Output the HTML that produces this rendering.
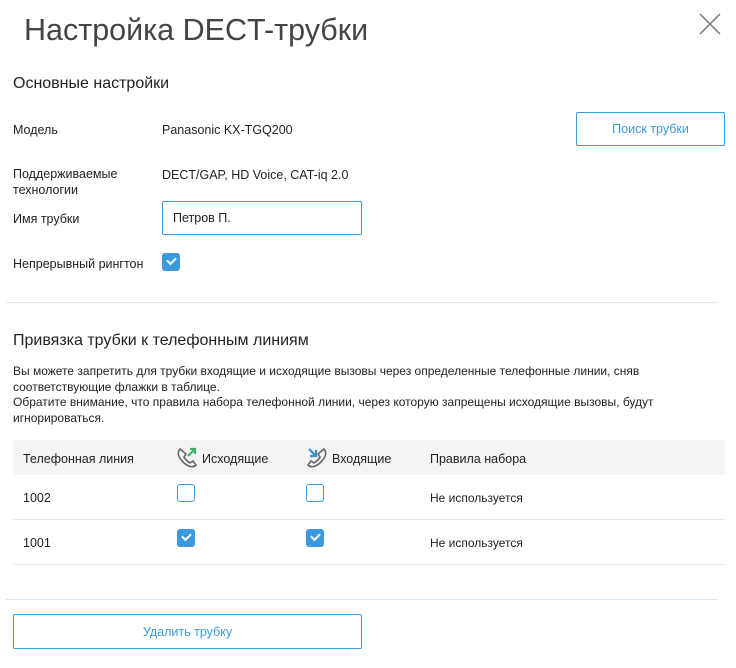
<!DOCTYPE html>
<html><head><meta charset="utf-8"><style>
*{margin:0;padding:0;box-sizing:border-box}
body{width:736px;height:668px;background:#fff;font-family:"Liberation Sans",sans-serif;color:#222;position:relative;overflow:hidden;font-size:12.5px}
.a{position:absolute;white-space:nowrap}
.cb{position:absolute;width:18px;height:18px;border:1.5px solid #3b99dc;border-radius:3px;background:#fff}
.cb.on{background:#3b99dc}
.cb.on:after{content:"";position:absolute;left:4px;top:3px;width:7px;height:4px;border-left:2px solid #fff;border-bottom:2px solid #fff;transform:rotate(-45deg)}
.hr{position:absolute;left:6px;width:712px;height:1px;background:#d9e8f1}
.btn{position:absolute;border:1px solid #3b99dc;border-radius:2px;color:#3b99dc;text-align:center;font-size:12.5px}
</style></head><body>
<div class="a" style="left:24px;top:13px;font-size:30.5px;color:#444">Настройка DECT-трубки</div>
<svg class="a" style="left:699px;top:13px" width="22" height="22"><path d="M1 1L21 21M21 1L1 21" stroke="#777" stroke-width="1.5"/></svg>
<div class="a" style="left:13px;top:75px;font-size:16px">Основные настройки</div>
<div class="a" style="left:13px;top:123px">Модель</div>
<div class="a" style="left:162px;top:123px">Panasonic KX-TGQ200</div>
<div class="btn" style="left:576px;top:112px;width:149px;height:34px;line-height:33px">Поиск трубки</div>
<div class="a" style="left:13px;top:166px;line-height:16px">Поддерживаемые<br>технологии</div>
<div class="a" style="left:162px;top:168px">DECT/GAP, HD Voice, CAT-iq 2.0</div>
<div class="a" style="left:13px;top:212px">Имя трубки</div>
<div class="a" style="left:162px;top:201px;width:200px;height:34px;border:1px solid #3b99dc;border-radius:2px;padding:9px 10px">Петров П.</div>
<div class="a" style="left:13px;top:257px">Непрерывный рингтон</div>
<div class="cb on" style="left:162px;top:253px"></div>
<div class="hr" style="top:302px"></div>
<div class="a" style="left:13px;top:332px;font-size:16px">Привязка трубки к телефонным линиям</div>
<div class="a" style="left:13px;top:364px;line-height:15.5px;font-size:12px">Вы можете запретить для трубки входящие и исходящие вызовы через определенные телефонные линии, сняв<br>соответствующие флажки в таблице.<br>Обратите внимание, что правила набора телефонной линии, через которую запрещены исходящие вызовы, будут<br>игнорироваться.</div>
<div class="a" style="left:13px;top:440px;width:712px;height:35px;background:#f4f4f4"></div>
<div class="a" style="left:23px;top:452px">Телефонная линия</div>
<svg class="a" style="left:176px;top:446px" width="22" height="22"><path d="M4 3c-3 3-2 8 3 13s10 6 13 3l-3-4-3 2c-2-1-5-4-6-6l2-3z" fill="none" stroke="#666" stroke-width="1.6"/><path d="M12 10l7-7M14 3h5v5" fill="none" stroke="#3fae6a" stroke-width="2.2"/></svg>
<div class="a" style="left:202px;top:452px">Исходящие</div>
<svg class="a" style="left:306px;top:446px" width="22" height="22"><path d="M18 3c3 3 2 8-3 13s-10 6-13 3l3-4 3 2c2-1 5-4 6-6l-2-3z" fill="none" stroke="#666" stroke-width="1.6"/><path d="M3 3l7 7M4 10h6V4" fill="none" stroke="#3b8fd0" stroke-width="2.2"/></svg>
<div class="a" style="left:332px;top:452px">Входящие</div>
<div class="a" style="left:430px;top:452px">Правила набора</div>
<div class="a" style="left:23px;top:491px">1002</div>
<div class="cb" style="left:177px;top:484px"></div>
<div class="cb" style="left:306px;top:484px"></div>
<div class="a" style="left:430px;top:491px;font-size:12px">Не используется</div>
<div class="a" style="left:13px;top:519px;width:712px;height:1px;background:#dde8ef"></div>
<div class="a" style="left:23px;top:536px">1001</div>
<div class="cb on" style="left:177px;top:529px"></div>
<div class="cb on" style="left:306px;top:529px"></div>
<div class="a" style="left:430px;top:536px;font-size:12px">Не используется</div>
<div class="a" style="left:13px;top:564px;width:712px;height:1px;background:#dde8ef"></div>
<div class="hr" style="top:599px"></div>
<div class="btn" style="left:13px;top:614px;width:349px;height:35px;line-height:34px">Удалить трубку</div>
</body></html>
